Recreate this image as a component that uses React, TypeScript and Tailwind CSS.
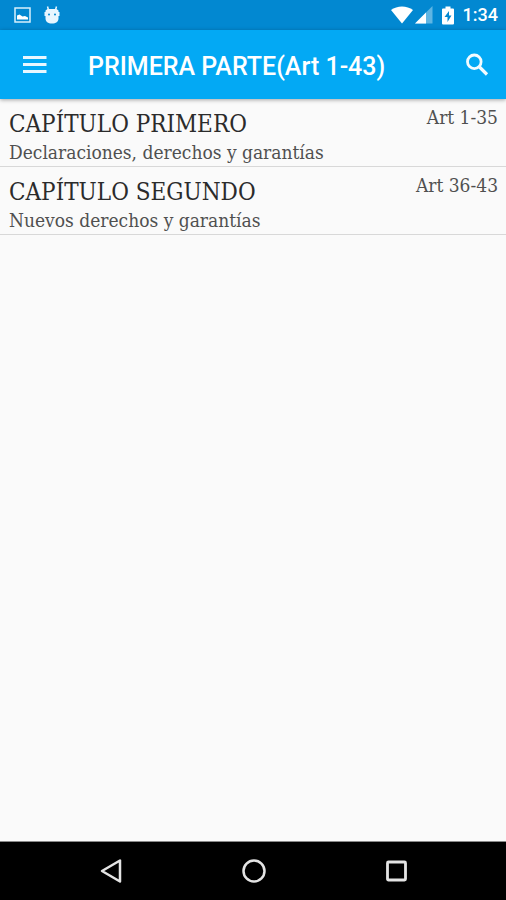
import { useState } from "react";

const chapters = [
  {
    title: "CAPÍTULO PRIMERO",
    description: "Declaraciones, derechos y garantías",
    articles: "Art 1-35",
  },
  {
    title: "CAPÍTULO SEGUNDO",
    description: "Nuevos derechos y garantías",
    articles: "Art 36-43",
  },
];

const StatusBar = () => (
  <div className="flex h-[30px] items-center justify-between bg-[#0288d1] pr-2 pl-3.5 text-white">
    <div className="flex items-center gap-3">
      {/* Picture notification */}
      <svg width="17" height="16" viewBox="0 0 17 16" fill="none">
        <rect x="1" y="1" width="15" height="14" stroke="#d8effc" strokeWidth="1.5" />
        <path d="M3 12.5V8.5L5.5 7.5L8.5 9.5L11 9L14 10.5V12.5Z" fill="#fff" />
      </svg>
      {/* Android head */}
      <svg width="18" height="18" viewBox="0 0 18 18">
        <path d="M4.5 .5L5.5 4M13.5 .5L12.5 4" stroke="#e8f6ff" strokeWidth="1.5" />
        <path
          d="M4.5 3H13.5L15.5 4.5V6H16.5V10H15.5V12.5C15.5 15.5 13 17.5 9 17.5S2.500 15.5 2.500 12.5V10H1.5V6H2.5V4.5Z"
          fill="#e8f6ff"
        />
        <circle cx="6" cy="8.5" r="1" fill="#0288d1" />
        <circle cx="12" cy="8.5" r="1" fill="#0288d1" />
      </svg>
    </div>
    <div className="flex items-center">
      <svg width="22" height="18" viewBox="0 0 22 18" fill="#fff">
        <path d="M0 4C6 -.7 16 -.7 22 4L11 17.5Z" />
      </svg>
      <svg className="ml-0.5" width="18" height="18" viewBox="0 0 18 18">
        <path d="M0 17.5L17.5 0V17.5Z" fill="#5fb5e3" />
        <path d="M0 17.5L11 6.5V17.5Z" fill="#fff" />
      </svg>
      <svg className="ml-2" width="14" height="19" viewBox="0 0 14 19">
        <path
          d="M4.5 .5H9.5V2.5H12Q13 2.5 13 3.5V17.5Q13 18.5 12 18.5H2Q1 18.5 1 17.5V3.5Q1 2.5 2 2.5H4.5Z"
          fill="#fff"
        />
        <path d="M8 5L3.5 11H6.5V16L10.5 9.5H8Z" fill="#0288d1" />
      </svg>
      <span className="ml-2 text-lg font-medium">1:34</span>
    </div>
  </div>
);

const AppBar = () => (
  <header className="relative flex h-[69px] items-center bg-[#03a9f4] pr-[17px] pl-[22px] text-white shadow-[0_1px_4px_rgba(0,0,0,0.35)]">
    <button type="button" aria-label="Menú">
      <svg width="26" height="18" viewBox="0 0 26 18" fill="#e8f7ff">
        <path d="M1 0H24.5V3H1ZM1 7H24.5V10H1ZM1 14H24.5V17H1Z" />
      </svg>
    </button>
    <h1 className="ml-10 flex-1 pt-1 text-[25px] leading-8 font-medium whitespace-nowrap">
      PRIMERA PARTE(Art 1-43)
    </h1>
    <button type="button" aria-label="Buscar">
      <svg width="24" height="24" viewBox="0 0 24 24" fill="none" stroke="#f2fbff">
        <circle cx="9.3" cy="8.8" r="6.8" strokeWidth="2.8" />
        <path d="M14.5 14L22 21.5" strokeWidth="3.2" />
      </svg>
    </button>
  </header>
);

const ChapterList = () => {
  const [selected, setSelected] = useState("");

  return (
    <ul className="font-['DejaVu_Serif_Condensed','DejaVu_Serif',serif]">
      {chapters.map(({ title, description, articles }) => (
        <li key={title} className="border-b border-[#d8d8d8]">
          <button
            type="button"
            aria-pressed={selected === title}
            onClick={() => setSelected(title)}
            className="flex w-full items-start justify-between pt-2 pr-2 pb-0.5 pl-[9px] text-left"
          >
            <span className="flex flex-col">
              <span className="text-2xl leading-[34px] text-[#2b2b2b]">{title}</span>
              <span className="text-[19px] leading-[23px] text-[#505050]">{description}</span>
            </span>
            <span className="text-[19px] leading-5 text-[#505050]">{articles}</span>
          </button>
        </li>
      ))}
    </ul>
  );
};

const NavigationBar = () => (
  <nav className="flex h-[59px] items-center justify-center gap-[118px] border-t border-[#8a8a8a] bg-black pl-0.5">
    <button type="button" aria-label="Atrás">
      <svg width="24" height="26" viewBox="0 0 24 26" fill="none">
        <path d="M21 2.5V23.5L3 13Z" stroke="#e4e4e4" strokeWidth="2.5" strokeLinejoin="round" />
      </svg>
    </button>
    <button type="button" aria-label="Inicio">
      <svg width="26" height="26" viewBox="0 0 26 26" fill="none">
        <circle cx="13" cy="13" r="10.5" stroke="#e4e4e4" strokeWidth="2.5" />
      </svg>
    </button>
    <button type="button" aria-label="Recientes">
      <svg width="24" height="26" viewBox="0 0 24 26" fill="none">
        <rect x="2.5" y="4" width="18" height="18" rx="1" stroke="#e4e4e4" strokeWidth="2.8" />
      </svg>
    </button>
  </nav>
);

const App = () => {
  return (
    <div className="flex min-h-screen flex-col bg-[#fafafa] font-['Roboto',sans-serif]">
      <StatusBar />
      <AppBar />
      <main className="flex-1">
        <ChapterList />
      </main>
      <NavigationBar />
    </div>
  );
};

export default App;
